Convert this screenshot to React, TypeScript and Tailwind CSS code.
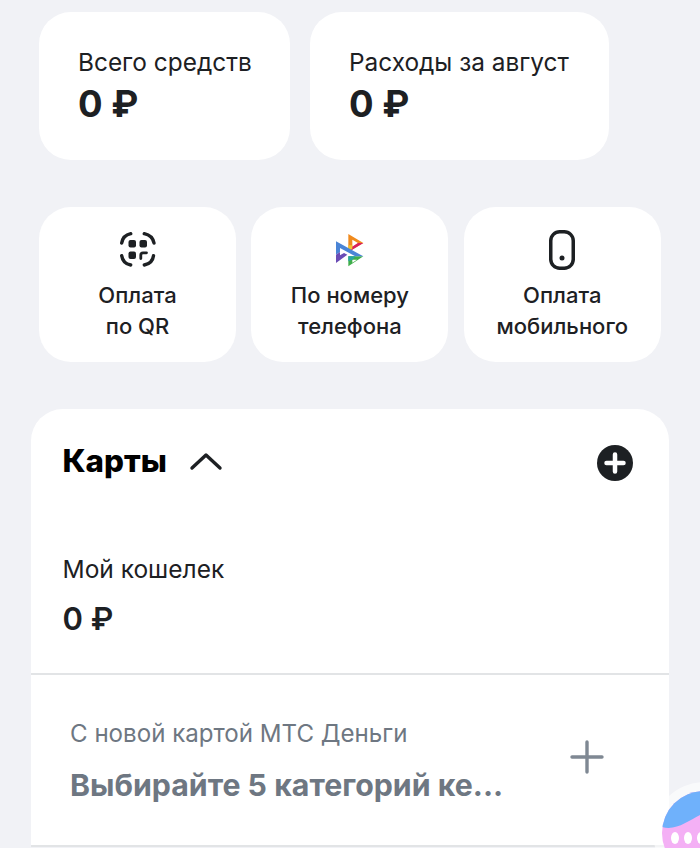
const font = "font-['Inter',sans-serif]";

const QrIcon = () => (
  <svg width="36" height="36" viewBox="0 0 36 36" fill="none">
    <g stroke="#1d2023" strokeWidth="3.4" strokeLinecap="round">
      <path d="M1.700 11 C2.500 6 5.500 2.800 10.700 1.700" />
      <path d="M24.300 1.700 C29.500 2.800 33 6 34 11" />
      <path d="M1.700 23.700 C2.500 29 5.500 32 10.700 33" />
      <path d="M24.300 33 C29.500 32 32.800 29 33.500 23.700" />
    </g>
    <rect x="8.500" y="8" width="7.500" height="7.500" rx="2" fill="#1d2023" />
    <rect x="19.500" y="8" width="7.500" height="7.500" rx="2" fill="#1d2023" />
    <rect x="8.500" y="19.500" width="7.500" height="7.500" rx="2" fill="#1d2023" />
    <path d="M20.800 26.500 V23 C20.800 21.700 21.700 20.800 23 20.800 H26.500" stroke="#1d2023" strokeWidth="2.800" strokeLinecap="round" />
  </svg>
);

// coordinates follow the logo's own grid
const SbpIcon = () => (
  <svg width="30" height="35" viewBox="75 35 90 105">
    <path d="M115 38 L160 65 L115 92 Z M127 55 V76 L144 65 Z" fill="#f08a1d" fillRule="evenodd" />
    <path d="M160 65 L115 92 L127 76 L144 65 Z" fill="#d81f5f" />
    <path d="M115 72 H127 V82 L115 92 Z" fill="#f2c230" />
    <path d="M115 105 H160 L115 135 Z M127 115 V124 L141 115 Z" fill="#3fae49" fillRule="evenodd" />
    <path d="M115 105 L137 105 L127 115 L115 120 Z" fill="#2aa5a0" />
    <path d="M78 60 L160 105 L136 105 L90 80 V92 L78 100 Z" fill="#4a84d6" />
    <path d="M78 100 L90 92 V102 L102 95 L112 100 L78 125 Z" fill="#6a4bb5" />
  </svg>
);

const PhoneIcon = () => (
  <svg width="26" height="40" viewBox="0 0 26 40" fill="none">
    <rect x="1.750" y="1.750" width="22.500" height="36.500" rx="9" stroke="#1d2023" strokeWidth="3.500" />
    <circle cx="13" cy="28" r="2.500" fill="#1d2023" />
  </svg>
);

const Stat = (props: { title: string; width: string }) => {
  return (
    <div className={`${props.width} h-[148px] rounded-[32px] bg-white pl-[39px] pt-[34px]`}>
      <div className="text-[24.400px] leading-[32px] text-[#1d2023]">{props.title}</div>
      <div className="mt-[6px] text-[36.500px] leading-[40px] font-bold text-[#1d2023]">0 ₽</div>
    </div>
  );
};

const Action = (props: { icon: React.ReactNode; lines: string[] }) => {
  return (
    <div className="w-[197px] h-[155px] rounded-[32px] bg-white flex flex-col items-center">
      <div className="h-[40px] mt-[23px] flex items-center justify-center">{props.icon}</div>
      <div className="mt-[10px] text-center text-[22px] leading-[31px] font-medium text-[#1d2023]">
        {props.lines.map((line) => (
          <div key={line}>{line}</div>
        ))}
      </div>
    </div>
  );
};

export default function App() {
  return (
    <div className={`${font} w-[700px] h-[848px] overflow-hidden bg-[#f1f2f6] relative`}>
      <div className="flex gap-[20px] pl-[39px] pt-[12px]">
        <Stat title="Всего средств" width="w-[251px]" />
        <Stat title="Расходы за август" width="w-[299px]" />
      </div>

      <div className="flex gap-[15.400px] pl-[39px] mt-[47px]">
        <Action icon={<QrIcon />} lines={["Оплата", "по QR"]} />
        <Action icon={<SbpIcon />} lines={["По номеру", "телефона"]} />
        <Action icon={<PhoneIcon />} lines={["Оплата", "мобильного"]} />
      </div>

      <div className="mx-[31px] mt-[47px] rounded-t-[32px] bg-white">
        <div className="h-[266px] pl-[31.500px] pr-[36px] pt-[30px] border-b-2 border-[#e2e4e6]">
          <div className="flex items-center justify-between h-[44px]">
            <div className="flex items-center gap-[22px]">
              <span className="text-[31.300px] leading-[44px] font-extrabold text-black">Карты</span>
              <svg width="34" height="20" viewBox="0 0 34 20" fill="none">
                <path d="M3 17 L17 4 L31 17" stroke="#1d2023" strokeWidth="3.400" strokeLinecap="round" strokeLinejoin="round" />
              </svg>
            </div>
            <svg width="36" height="36" viewBox="0 0 36 36" className="mt-[4px]">
              <circle cx="18" cy="18" r="18" fill="#1d2023" />
              <path d="M18 9.500 V26.500 M9.500 18 H26.500" stroke="#fff" strokeWidth="4.500" strokeLinecap="round" />
            </svg>
          </div>
          <div className="mt-[70px] text-[24.500px] leading-[32px] text-[#1d2023]">Мой кошелек</div>
          <div className="mt-[16px] text-[31px] leading-[36px] font-semibold text-[#1d2023]">0 ₽</div>
        </div>
        <div className="h-[172px] pl-[39px] pr-[65px] flex items-center justify-between border-b-2 border-[#e2e4e6]">
          <div>
            <div className="text-[24.100px] leading-[32px] text-[#6e7782]">С новой картой МТС Деньги</div>
            <div className="mt-[17px] text-[30.300px] leading-[36px] font-bold text-[#6e7782]">Выбирайте 5 категорий ке...</div>
          </div>
          <svg width="34" height="34" viewBox="0 0 34 34" className="mb-[7px]">
            <path d="M17 2 V32 M2 17 H32" stroke="#7f8893" strokeWidth="3.400" strokeLinecap="round" />
          </svg>
        </div>
      </div>

      <div className="absolute left-[653px] top-[782px] w-[102px] h-[102px] rounded-full bg-white/60 p-[9px]">
        <svg width="84" height="84" viewBox="0 0 84 84">
          <clipPath id="face">
            <circle cx="42" cy="42" r="42" />
          </clipPath>
          <g clipPath="url(#face)">
            <rect width="84" height="84" fill="#f4b0f5" />
            <path d="M0 36 C14 40 26 30 38 24 C52 18 70 22 84 34 V0 H0 Z" fill="#6fb1fb" />
            <ellipse cx="13" cy="47" rx="4" ry="6" fill="#fff" />
            <ellipse cx="26" cy="47" rx="4" ry="6" fill="#fff" />
            <ellipse cx="39" cy="47" rx="4" ry="6" fill="#fff" />
          </g>
        </svg>
      </div>
    </div>
  );
}
